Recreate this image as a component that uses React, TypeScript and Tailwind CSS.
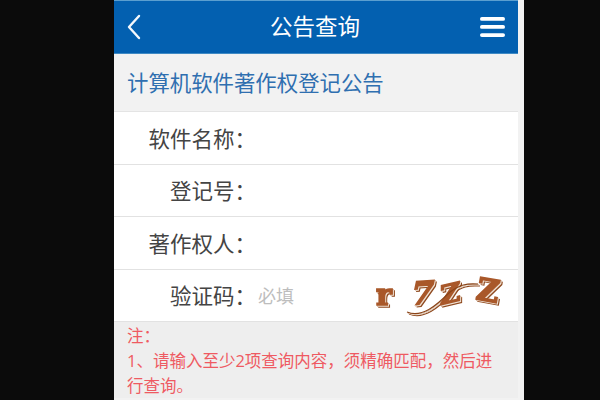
import React from "react";

function Row({ label, children, h }: { label: string; children?: React.ReactNode; h: string }) {
  return (
    <div className={`${h} bg-white border-b border-[#e2e2e2] flex items-center`}>
      <div className="w-[142px] pt-[1px] text-right text-[21.5px] leading-none text-[#444444] shrink-0">{label}</div>
      {children}
    </div>
  );
}

function Glyph({ c, size, transform }: { c: string; size: number; transform: string }) {
  return (
    <text
      transform={transform}
      fontSize={size}
      fontFamily="'DejaVu Serif','Liberation Serif',serif"
      fontWeight="900"
      fill="#a9582a"
      stroke="#a9582a"
      strokeWidth="1.6"
    >
      {c}
    </text>
  );
}

export default function App() {
  return (
    <div className="w-[600px] h-[400px] overflow-hidden bg-[#0b0b0b] flex justify-start pl-[114px] font-['Open_Sans','Noto_Sans_CJK_SC',sans-serif]">
      <div className="w-[410px] h-[400px] bg-[#f2f2f2] overflow-hidden shrink-0">
        <div className="w-[404px] h-[54px] border-t border-[#5b9fd0] border-b border-b-[#3f8ac4] bg-[#0360b0] flex items-center justify-between pl-[13px] pr-[13px]">
          <svg width="14" height="26" viewBox="0 0 14 26" fill="none" stroke="#f4f8fc" strokeWidth="2.4" strokeLinecap="round" strokeLinejoin="round">
            <path d="M12 2 L2 13 L12 24" />
          </svg>
          <div className="text-[22.5px] leading-none text-white pl-[9px]">公告查询</div>
          <svg width="25" height="20" viewBox="0 0 25 20" fill="#ffffff">
            <rect x="0" y="0" width="25" height="3.8" rx="1.9" />
            <rect x="0" y="8" width="25" height="3.8" rx="1.9" />
            <rect x="0" y="16.2" width="25" height="3.8" rx="1.9" />
          </svg>
        </div>
        <div className="w-[404px]">
          <div className="h-[58px] flex items-center pl-[13px] pt-[1px] border-b border-[#e4e4e4] text-[21.4px] leading-none text-[#2f6fb0]">
            计算机软件著作权登记公告
          </div>
          <Row label="软件名称：" h="h-[53px]" />
          <Row label="登记号：" h="h-[52px]" />
          <Row label="著作权人：" h="h-[53px]" />
          <Row label="验证码：" h="h-[52px]">
            <span className="text-[18px] leading-none text-[#bdbdbd] ml-[2px]">必填</span>
            <svg className="ml-auto mr-[12px] mb-[4px] overflow-visible [filter:drop-shadow(1px_1px_0_#efe0d2)_drop-shadow(1px_1px_0_#8f4a20)]" width="132" height="44" viewBox="0 0 132 44">
              <Glyph c="r" size={30} transform="translate(2 33)" />
              <Glyph c="7" size={32} transform="translate(35 33) skewX(-16) rotate(-4)" />
              <Glyph c="Z" size={27} transform="translate(66 33) skewX(-14) rotate(-14)" />
              <Glyph c="Z" size={31} transform="translate(101 27) rotate(10)" />
              <path d="M33 40 C48 46 62 34 76 20 C86 13 92 11 104 12" fill="none" stroke="#8a4418" strokeWidth="1.2" />
            </svg>
          </Row>
          <div className="pl-[13px] pr-[24px] pt-[1px] text-[16.5px] leading-[25px] text-[#ee5a62] bg-[#eeeeee]">
            <div>注：</div>
            <div>1、请输入至少2项查询内容，须精确匹配，然后进行查询。</div>
          </div>
        </div>
      </div>
    </div>
  );
}
